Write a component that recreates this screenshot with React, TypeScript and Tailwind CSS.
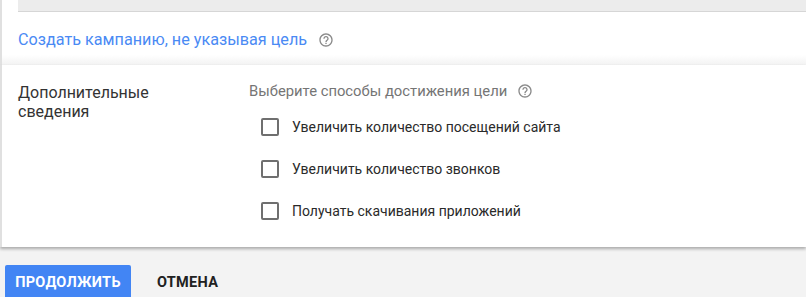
import React from "react";

function HelpIcon() {
  return (
    <svg width="16" height="16" viewBox="0 0 24 24" className="shrink-0">
      <path
        fill="#8a8a8a"
        d="M11 18h2v-2h-2v2zm1-16C6.48 2 2 6.48 2 12s4.48 10 10 10 10-4.48 10-10S17.52 2 12 2zm0 18c-4.41 0-8-3.59-8-8s3.59-8 8-8 8 3.59 8 8-3.59 8-8 8zm0-14c-2.21 0-4 1.79-4 4h2c0-1.1.9-2 2-2s2 .9 2 2c0 2-3 1.75-3 5h2c0-2.25 3-2.5 3-5 0-2.21-1.79-4-4-4z"
      />
    </svg>
  );
}

function Check({ label }: { label: string }) {
  return (
    <div className="flex items-center h-[18px]">
      <div className="w-[18px] h-[18px] border-2 border-[#6f6f6f] rounded-[2px] ml-[12px]" />
      <span className="ml-[13px] text-[14px] text-[#2a2a2a]">{label}</span>
    </div>
  );
}

export default function App() {
  return (
    <div
      className="w-[806px] h-[297px] bg-[#f3f3f3] overflow-hidden flex flex-col"
      style={{ fontFamily: "Roboto, 'Liberation Sans', sans-serif" }}
    >
      {/* top card */}
      <div className="shrink-0 bg-white border-l-2 border-[#e0e0e0] h-[65px] flex flex-col">
        <div className="ml-[16px] h-[12px] bg-[#ececec] border-b border-[#d6d6d6]" />
        <div className="flex items-center ml-[16px] mt-[18px] h-[20px]">
          <span className="text-[16.2px] text-[#4a8af4]">
            Создать кампанию, не указывая цель
          </span>
          <span className="ml-[11px] flex"><HelpIcon /></span>
        </div>
        <div className="mt-auto h-[10px] bg-gradient-to-b from-white to-[#f2f2f2]" />
      </div>

      {/* second card */}
      <div className="shrink-0 bg-white border-l-2 border-[#e0e0e0] h-[182px] shadow-[0_2px_3px_rgba(0,0,0,0.3)] flex relative z-10">
        <div className="w-[247px] pl-[16px] pt-[18px] text-[16px] leading-[19px] text-[#333]">
          Дополнительные
          <br />
          сведения
        </div>
        <div className="pt-[16px] flex flex-col">
          <div className="flex items-center h-[20px]">
            <span className="text-[14.8px] text-[#757575]">
              Выберите способы достижения цели
            </span>
            <span className="ml-[10px] flex"><HelpIcon /></span>
          </div>
          <div className="mt-[17px] flex flex-col gap-[24px]">
            <Check label="Увеличить количество посещений сайта" />
            <Check label="Увеличить количество звонков" />
            <Check label="Получать скачивания приложений" />
          </div>
        </div>
      </div>

      {/* buttons */}
      <div className="shrink-0 flex items-start mt-[18px] ml-[5px]">
        <button className="w-[126px] h-[36px] bg-[#4285f4] rounded-[2px] text-white text-[14.5px] font-bold tracking-[0.3px]">
          ПРОДОЛЖИТЬ
        </button>
        <button className="ml-[12px] px-[14px] h-[36px] text-[14.5px] font-bold text-[#212121] tracking-[0.3px]">
          ОТМЕНА
        </button>
      </div>
    </div>
  );
}
